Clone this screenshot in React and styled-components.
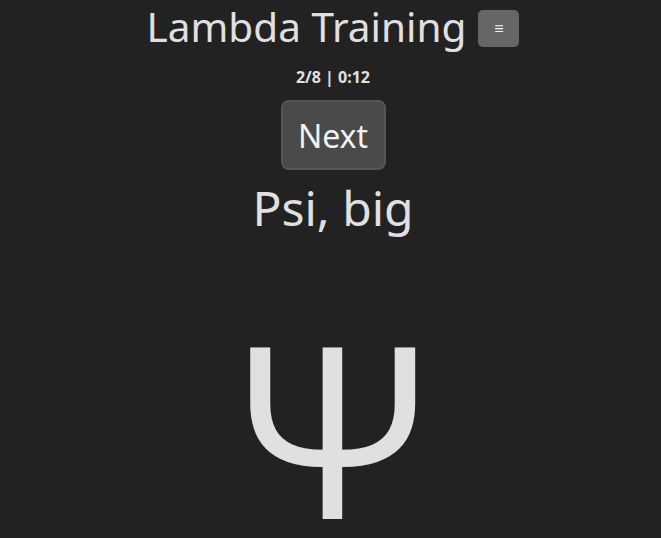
import React from "react";
import styled, { createGlobalStyle } from "styled-components";

const Global = createGlobalStyle`
    html, body {
        margin: 0;
        background: #222222;
        color: #e0e0e0;
        font-family: "Noto Sans", "Open Sans", sans-serif;
        overflow: hidden;
    }
`;

const Page = styled.div`
    display: flex;
    flex-direction: column;
    align-items: center;
    padding-left: 5px;

    & > * {
        flex-shrink: 0;
    }
`;

const Header = styled.div`
    display: flex;
    align-items: center;
    gap: 12px;
`;

const Title = styled.h1`
    margin: 0;
    font-size: 40.5px;
    font-weight: 400;
    line-height: 54px;
`;

const MenuButton = styled.button`
    width: 41px;
    height: 37px;
    margin-top: 2px;
    border: none;
    border-radius: 5px;
    background: #666666;
    color: #f4f4f4;
    font-size: 16px;
    font-family: inherit;
    padding: 0;
`;

const Status = styled.div`
    margin-top: 12px;
    font-size: 16px;
    font-weight: 700;
    line-height: 22px;
`;

const NextButton = styled.button`
    margin-top: 12px;
    width: 105px;
    height: 70px;
    border: 2px solid #555555;
    border-radius: 8px;
    background: #4a4a4a;
    color: #f2f2f2;
    font-family: inherit;
    font-size: 32px;
    padding: 0;
`;

const Prompt = styled.div`
    margin-top: 5px;
    font-size: 48px;
    line-height: 66px;
`;

const Glyph = styled.div`
    margin-top: 75px;
    height: 220px;
    overflow: hidden;
    font-family: "Open Sans", sans-serif;
    font-size: 240px;
    font-weight: 500;
    line-height: 220px;
`;

const App = () => {
    return (
        <Page>
            <Global />
            <Header>
                <Title>Lambda Training</Title>
                <MenuButton>≡</MenuButton>
            </Header>
            <Status>2/8 | 0:12</Status>
            <NextButton>Next</NextButton>
            <Prompt>Psi, big</Prompt>
            <Glyph>Ψ</Glyph>
        </Page>
    );
};

export default App;
